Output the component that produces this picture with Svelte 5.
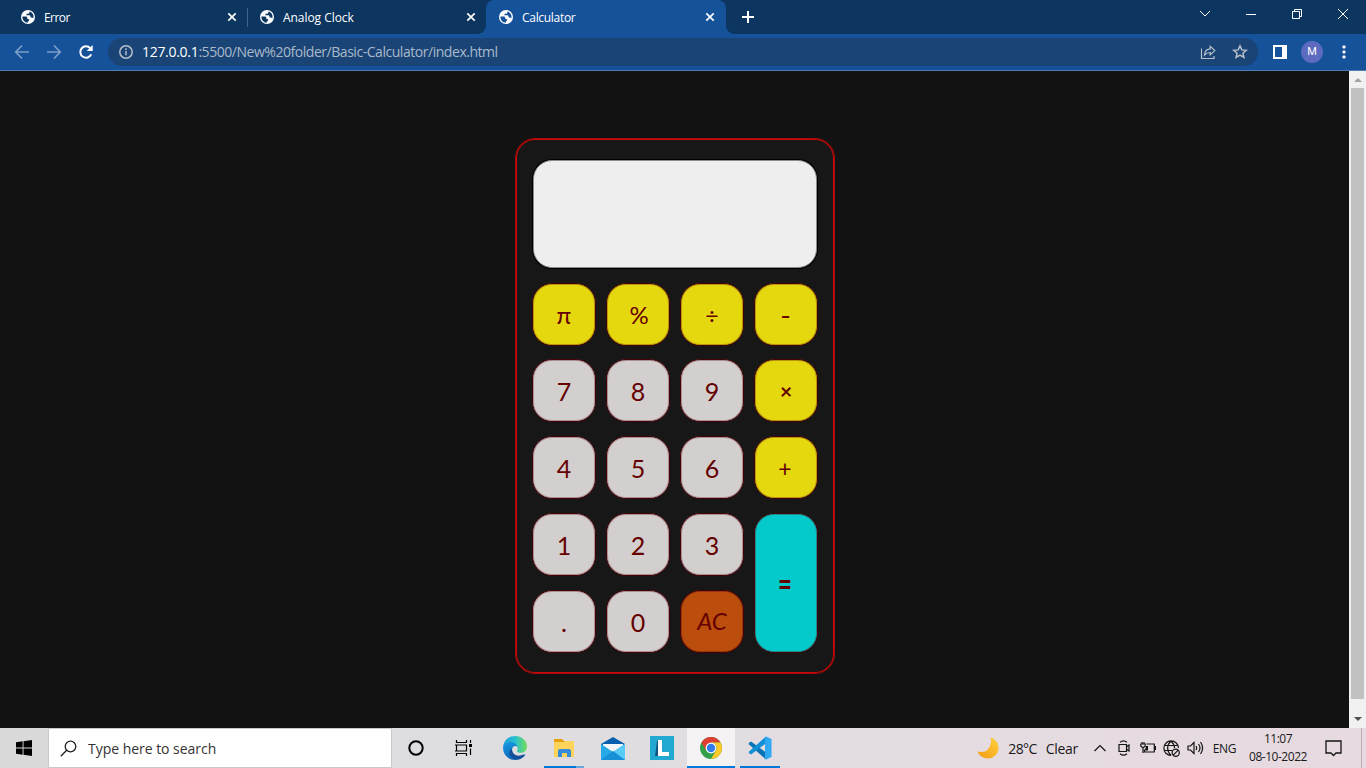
<script>
  const tabs = [
    { title: 'Error', active: false },
    { title: 'Analog Clock', active: false },
    { title: 'Calculator', active: true }
  ];
  const keys = [
    ['π', 'op pi'], ['%', 'op pct'], ['÷', 'op divide'], ['-', 'op minus'],
    ['7', ''], ['8', ''], ['9', ''], ['×', 'op times'],
    ['4', ''], ['5', ''], ['6', ''], ['+', 'op plus-key'],
    ['1', ''], ['2', ''], ['3', ''], ['=', 'equals'],
    ['.', ''], ['0', ''], ['AC', 'clear']
  ];
</script>

<div class="desktop">
  <header class="tabstrip">
    {#each tabs as tab}
      <div class="tab" class:active={tab.active}>
        <svg class="globe" width="14" height="14" viewBox="0 0 14 14">
          <circle cx="7" cy="7" r="7" fill="#fff" />
          <path d="M1.4 6.6h3.2c1 0 1.7.7 1.7 1.6 0 .7.5 1 1.3 1h.5v1c0 .7-.5 1-1.3 1.1v1.4C3.700 12.800 1.300 10.100 1.400 6.600ZM8.400 1.500v.7c0 1-.6 1.600-1.600 1.600H5.500v1.500h2.600c1 0 1.500.6 1.500 1.500v.6h1.200c.7 0 1.200.4 1.400 1C13.300 5.300 11.500 2.200 8.400 1.500Z" fill={tab.active ? '#15529a' : '#0c355f'} />
        </svg>
        <span class="title">{tab.title}</span>
        <svg class="close" width="10" height="10" viewBox="0 0 10 10"><path d="M1.300 1.300l7.400 7.400M8.700 1.300L1.300 8.700" stroke="#fff" stroke-width="1.700" /></svg>
      </div>
    {/each}
    <svg class="plus" width="12" height="12" viewBox="0 0 12 12"><path d="M6 0v12M0 6h12" stroke="#fff" stroke-width="2" /></svg>
    <div class="window-controls">
      <svg width="12" height="12" viewBox="0 0 12 12"><path d="M1 3l5 5 5-5" /></svg>
      <svg width="12" height="12" viewBox="0 0 12 12"><path d="M1 6.500h10" /></svg>
      <svg width="12" height="12" viewBox="0 0 12 12"><path d="M1.500 3.500h7v7h-7zM3.500 3.500v-2h7v7h-2" /></svg>
      <svg width="12" height="12" viewBox="0 0 12 12"><path d="M1 1l10 10M11 1L1 11" /></svg>
    </div>
  </header>

  <nav class="toolbar">
    <svg class="arrow" width="16" height="16" viewBox="0 0 16 16"><path d="M15 8H2M8 1.500L1.700 8 8 14.500" /></svg>
    <svg class="arrow" width="16" height="16" viewBox="0 0 16 16"><path d="M1 8h13M8 1.500L14.300 8 8 14.500" /></svg>
    <svg class="reload" width="16" height="16" viewBox="0 0 16 16"><path d="M13.200 10.400A5.700 5.700 0 1 1 12.300 4.200L13.400 5.400" /><path d="M14.700 1v6H8.700z" class="solid" /></svg>
    <div class="address">
      <svg width="14" height="14" viewBox="0 0 14 14"><circle cx="7" cy="7" r="6.200" /><path d="M7 6v4.200M7 3.300v1.600" /></svg>
      <span class="url"><b>127.0.0.1</b>:5500/New%20folder/Basic-Calculator/index.html</span>
      <svg class="share" width="16" height="16" viewBox="0 0 16 16"><path d="M1.500 4.500v10h12.500v-2.500M4.500 11c.3-4 2.400-6 5.700-6.200V2.300l4.600 4.300-4.600 4.300V8.500C7.700 8.500 6 9.300 4.500 11Z" /></svg>
      <svg class="star" width="16" height="16" viewBox="0 0 16 16"><path d="M8 1.900l1.800 4 4.400.4-3.300 2.900 1 4.300L8 11.200l-3.900 2.300 1-4.300L1.800 6.300l4.400-.4Z" /></svg>
    </div>
    <svg class="panel" width="14" height="14" viewBox="0 0 14 14"><path fill="#fff" fill-rule="evenodd" d="M0 0h14v14H0zM2 2v10h7V2z" /></svg>
    <span class="avatar">M</span>
    <svg class="dots" width="4" height="14" viewBox="0 0 4 14"><g fill="#fff"><rect x=".5" y=".5" width="3" height="3" rx="1" /><rect x=".5" y="5.500" width="3" height="3" rx="1" /><rect x=".5" y="10.500" width="3" height="3" rx="1" /></g></svg>
  </nav>

  <main class="viewport">
    <div class="page">
      <section class="calculator">
        <div class="screen"></div>
        <div class="keys">
          {#each keys as [label, kind]}
            <button class={`key ${kind}`}><span>{label}</span></button>
          {/each}
        </div>
      </section>
    </div>
    <div class="scrollbar">
      <i class="up"></i>
      <div class="thumb"></div>
      <i class="down"></i>
    </div>
  </main>

  <footer class="taskbar">
    <svg class="start" width="16" height="16" viewBox="0 0 16 16"><path d="M0 2.200l6.600-.9v6.200H0zM7.500 1.200L16 0v7.500H7.500zM0 8.500h6.600v6.200L0 13.800zM7.500 8.500H16V16l-8.500-1.200z" /></svg>
    <div class="search">
      <svg width="17" height="17" viewBox="0 0 17 17"><circle cx="10.500" cy="6.500" r="5.300" /><path d="M6.700 10.300L.8 16.200" /></svg>
      <span>Type here to search</span>
    </div>
    <div class="apps">
      <div class="app cortana"><svg width="16" height="16" viewBox="0 0 16 16"><circle cx="8" cy="8" r="6.700" fill="none" stroke="#000" stroke-width="2" /></svg></div>
      <div class="app tasks"><svg width="17" height="16" viewBox="0 0 17 16"><path d="M1.500 0v2.500h10V0M1.500 16v-2.500h10V16M1.500 5h10v6h-10zM0 5h1.500M0 11h1.500M15.500 0v3M15.500 8.500V15" fill="none" stroke="#000" stroke-width="1.200" /><path d="M14 4h3v3h-3z" /></svg></div>
      <div class="app"><svg width="24" height="24" viewBox="0 0 24 24">
        <defs>
          <linearGradient id="edgeTop" x1="0" y1="0.500" x2="1" y2="0.500"><stop stop-color="#1c9ddd" /><stop offset=".5" stop-color="#29bfd0" /><stop offset="1" stop-color="#70df58" /></linearGradient>
          <linearGradient id="edgeBody" x1="0" y1="0" x2="0.500" y2="1"><stop stop-color="#199be4" /><stop offset="1" stop-color="#0b62b6" /></linearGradient>
        </defs>
        <path d="M.1 11C.7 4.500 5.700 0 12 0c7 0 12 5 12 10.500 0 4-3 6.300-6.300 6.300-2.800 0-4.300-1.200-3.500-2.500 1-1.700.5-5-3.500-6C6.500 7.300 2 8.300.1 11Z" fill="url(#edgeTop)" />
        <path d="M.1 11C1.500 7.500 5 5.800 8.500 6.200c3.300.4 5.300 2.300 5.700 4.700C12.500 9.200 9 10 9 14c0 4.500 5 8 10.500 6.500C17.500 22.800 14.800 24 12 24 5 24-.5 18 .1 11Z" fill="url(#edgeBody)" />
        <path d="M9.100 12.500c-.7 5 4.200 8.200 9 6.800 1.800-.5 3.300-1.300 4-.6.200 1-2.600 3.500-5.200 4.500-5.500 1.500-10.900-2-10.400-7 .2-1.700 1.200-3 2.600-3.700Z" fill="#13509c" />
      </svg></div>
      <div class="app open files"><svg width="22" height="19" viewBox="0 0 22 19">
        <path d="M1 0h8l2 2h9v4H1z" fill="#e5a00d" />
        <path d="M1 3h10l1-1h9v16H1z" fill="#ffd35a" />
        <path d="M5 18v-6q0-2 2-2h9q2 0 2 2v6h-4v-4H9v4z" fill="#378bd8" />
      </svg></div>
      <div class="app mail"><svg width="24" height="23" viewBox="0 0 24 23">
        <path d="M0 7L12 0l12 7v4H0z" fill="#075fae" /><path d="M2 7h20v6l-10 5L2 13z" fill="#f5f8fa" />
        <path d="M0 7l12 8 12-8v16H0z" fill="#27a9e8" /><path d="M24 7v16L9 13l3 2z" fill="#59cbf6" /><path d="M0 23l12-9 12 9z" fill="#1790d8" />
      </svg></div>
      <div class="app lens"><svg width="24" height="24" viewBox="0 0 24 24"><path d="M0 0h24v24H0z" fill="#22a9d2" /><path d="M7 5l2-1v13h9l-1 3H5z" fill="#10557d" /><path d="M8 4h4v12h7v4H8z" fill="#fff" /></svg></div>
      <div class="app open selected"><svg width="22" height="22" viewBox="0 0 22 22">
        <circle cx="11" cy="11" r="11" fill="#34a04a" />
        <path d="M1.500 5.500A11 11 0 0 1 20.500 5.500H11L6.200 13.700Z" fill="#df3e32" />
        <path d="M20.500 5.500A11 11 0 0 1 11 22l4.800-8.200A5.500 5.500 0 0 0 11 5.500Z" fill="#ffc928" />
        <circle cx="11" cy="11" r="5.400" fill="#fff" /><circle cx="11" cy="11" r="4.200" fill="#327bea" />
      </svg></div>
      <div class="app open code"><svg width="24" height="24" viewBox="0 0 24 24">
        <path d="M1.500 6.500L3 5.500 20 18l-2 5.500L.5 8z" fill="#0873b7" />
        <path d="M.5 16L18 .5l1 6L3 18.500l-1.500-1z" fill="#138fd7" />
        <path d="M18 .5l5.500 2.600v17.800L18 23.500q-1 0-1-1.500V2q0-1.500 1-1.500z" fill="#31a8f2" />
      </svg></div>
    </div>
    <div class="weather">
      <svg width="22" height="22" viewBox="0 0 22 22"><defs><linearGradient id="moon" x1="0" y1="1" x2="1" y2="0"><stop stop-color="#f39b16" /><stop offset="1" stop-color="#ffd13b" /></linearGradient></defs><path d="M13.500.5C19 2.500 22 6.500 21.500 12c-.5 5-4.800 9.300-10.500 9.500C6 21.500 2 18.500.5 14.500c6 1.500 10-.5 12-4.500 1.700-3.500 2-6.500 1-9.500Z" fill="url(#moon)" /></svg>
      <span class="temp">28°C</span><span class="sky">Clear</span>
    </div>
    <div class="tray">
      <svg width="14" height="8" viewBox="0 0 14 8"><path d="M1.500 7L7 1.500 12.500 7" /></svg>
      <svg class="meet" width="12" height="16" viewBox="0 0 12 16"><path d="M1 4.500h7.500v7H1zM8.500 7l2.500-2v6L8.500 9M2 2.300Q5.500-.5 9 2.300M2 13.700q3.500 2.800 7 0" /></svg>
      <svg class="battery" width="16" height="12" viewBox="0 0 16 12"><path d="M6.500 2h7.800v8H4.500V7.500M14.500 4.500h1v3h-1M2 0v2M4 0v2M.8 2h4.400v2.300L3 5.800.8 4.300zM3 6v5" /><path d="M6 4h2v4.500H5z" fill="#111" stroke="none" /></svg>
      <svg class="network" width="17" height="17" viewBox="0 0 17 17"><path d="M15.500 8A7.300 7.300 0 1 0 8 15.500M8 1C3.500 5 3.500 11 8 15.500M8 1c2.200 2 3.500 4.400 3.500 7M1 5.500h14M1 10.500h8" /><circle cx="12.700" cy="12.700" r="3.600" /><path d="M10.200 15.200l5-5" /></svg>
      <svg class="sound" width="17" height="14" viewBox="0 0 17 14"><path d="M1 5h2.500L7 1.500v11L3.500 9H1zM9 5q1.300 2 0 4M11.500 3q3 4 0 8M13.500 1q4.200 6 0 12" /></svg>
      <span class="language">ENG</span>
    </div>
    <div class="clock"><span class="time">11:07</span><span class="date">08-10-2022</span></div>
    <svg class="notice" width="17" height="17" viewBox="0 0 17 17"><path d="M1 1h15v12h-5l-2.500 2.500L6 13H1z" /></svg>
    <div class="peek"></div>
  </footer>
</div>

<style>
  :global(body) { margin: 0; overflow: hidden; }
  * { box-sizing: border-box; }
  svg { flex: none; display: block; }
  .desktop { width: 1366px; height: 768px; display: flex; flex-direction: column; font-family: "Open Sans", "Noto Sans", sans-serif; background: #121212; }

  .tabstrip { height: 34px; background: #0c355f; display: flex; align-items: center; padding-left: 8px; flex: none; }
  .tab { position: relative; width: 239px; height: 34px; display: flex; align-items: center; padding: 0 9px 0 13px; color: #fff; font-size: 12px; }
  .tab:first-child::after { content: ""; position: absolute; right: -1px; top: 8px; height: 19px; width: 1px; background: #416387; }
  .tab.active { width: 240px; padding-right: 10px; background: #15529a; border-radius: 8px 8px 0 0; }
  .tab.active::before, .tab.active::after { content: ""; position: absolute; bottom: 0; width: 8px; height: 8px; }
  .tab.active::before { left: -8px; background: radial-gradient(circle at 0 0, transparent 7.500px, #15529a 8px); }
  .tab.active::after { right: -8px; background: radial-gradient(circle at 100% 0, transparent 7.500px, #15529a 8px); }
  .title { margin-left: 9px; flex: 1; font-size: 12px; letter-spacing: -0.05px; }
  .tab:first-child .title { letter-spacing: -0.55px; }
  .tab.active .title { letter-spacing: -0.3px; }
  .close { margin-right: 1px; }
  .plus { margin-left: 16px; }
  .window-controls { margin-left: auto; display: flex; gap: 34px; padding-right: 17px; padding-bottom: 6px; }
  .window-controls svg { fill: none; stroke: #fff; stroke-width: 1; }

  .toolbar { height: 37px; border-bottom: 1px solid #4c7eb5; background: #15529a; display: flex; align-items: center; padding-left: 14px; flex: none; }
  .arrow { fill: none; stroke: #7c9fc8; stroke-width: 1.700; margin-right: 16px; }
  .reload { fill: none; stroke: #fff; stroke-width: 2; margin-right: 14px; }
  .reload .solid { fill: #fff; stroke: none; }
  .address { width: 1150px; height: 28px; border-radius: 14px; background: #194475; display: flex; align-items: center; padding: 0 10px 0 11px; }
  .address svg { fill: none; stroke: #b7c0cb; stroke-width: 1.500; }
  .url { margin-left: 9px; font-size: 14px; line-height: 20px; color: #a9b9cb; flex: 1; letter-spacing: -0.46px; white-space: nowrap; }
  .url b { font-weight: 400; color: #fff; letter-spacing: -0.3px; }
  .address .share { margin-right: 16px; stroke-width: 1.200; }
  .panel { margin-left: 15px; }
  .avatar { width: 22px; height: 22px; margin-left: 14px; border-radius: 50%; background: #5c6bc0; color: #fff; font: 11px/22px Roboto, sans-serif; text-align: center; }
  .dots { margin-left: 19px; }

  .viewport { height: 657px; display: flex; flex: none; }
  .page { flex: 1; display: flex; justify-content: center; align-items: flex-start; padding-top: 67px; padding-left: 1px; background: #121212; }
  .calculator { width: 320px; height: 536px; border: 1px solid #a50a0a; box-shadow: inset 0 0 0 1px #d20808; border-radius: 20px; background: #171717; padding: 21px 17px; }
  .screen { width: 284px; height: 108px; background: #eee; border: 1px solid #8a8a8a; border-radius: 19px; box-shadow: 0 0 0 1px #000; }
  .keys { display: grid; grid-template-columns: repeat(4, 64px); grid-template-rows: repeat(5, 63px); column-gap: 10px; row-gap: 13.800px; margin: 14.500px 0 0 -1px; }
  .key { width: 64px; height: 63px; padding: 0; border: 1px solid #430006; box-shadow: inset 0 0 0 1px rgba(80, 0, 6, .3); border-radius: 20px; background: #d3cfce; color: #650000; font: 25px/1 Lato, sans-serif; display: flex; align-items: center; justify-content: center; }
  .key span { transform: translateY(0.500px); }
  .op { background: #e5d80f; }
  .op span { font-size: 23px; }
  .pi span { font-size: 24px; transform: translateY(1px); }
  .pct span { font-size: 24px; transform: translate(1px, 1px); }
  .divide span { transform: translateY(1px); }
  .minus span { font-size: 25px; transform: translate(0, 1px) scaleX(1.150); }
  .times span { font-size: 21px; font-weight: 700; transform: translateY(0); }
  .plus-key span { transform: translate(-1px, 1px); }
  .equals { grid-row: span 2; height: 140px; background: #05cacb; font: 700 24px/1 Lato, sans-serif; }
  .equals span { transform: translate(-1px, 1px) scaleY(1.350); }
  .clear { background: #bb4e0c; font: italic 24px/1 Lato, sans-serif; }
  .clear span { transform: translateY(0); }

  .scrollbar { width: 17px; background: #f1f1f1; display: flex; flex-direction: column; align-items: center; }
  .scrollbar i { border-left: 4px solid transparent; border-right: 4px solid transparent; }
  .up { margin-top: 7px; border-bottom: 4px solid #a3a3a3; }
  .thumb { width: 13px; height: 611px; margin-top: 6px; background: #c1c1c1; }
  .down { margin-top: 18px; border-top: 4px solid #505050; }

  .taskbar { height: 40px; display: flex; align-items: center; flex: none; background: linear-gradient(90deg, #d9d9d9, #dedde0 35%, #e4dce1 70%, #e7dae0); color: #191919; }
  .start { margin: 0 16px; }
  .search { width: 344px; height: 40px; border: 1px solid #c9c9c9; background: #fff; display: flex; align-items: center; padding-left: 11px; font-size: 14px; color: #333; letter-spacing: -0.03px; }
  .search svg { fill: none; stroke: #222; stroke-width: 1.300; margin-right: 11px; }
  .apps { display: flex; }
  .app { width: 49px; height: 40px; display: flex; align-items: center; justify-content: center; }
  .cortana { width: 48px; }
  .tasks { width: 50px; padding-right: 3px; }
  .open { box-shadow: inset 0 -2px #0078d7; }
  .selected { background: #f4f2f3; width: 48px; }
  .files { width: 40px; margin: 0 5px; box-shadow: none; background: linear-gradient(90deg, #0078d7 32px, #68a8df 32px) bottom / 100% 2px no-repeat; }
  .mail { padding-right: 2px; }
  .lens { padding-right: 1px; }
  .code { width: 40px; margin-left: 5px; }
  .weather { margin-left: auto; display: flex; align-items: center; font-size: 14px; }
  .temp { margin-left: 9px; letter-spacing: -0.55px; }
  .sky { margin-left: 9px; letter-spacing: -0.35px; }
  .tray { display: flex; align-items: center; margin-left: 15px; }
  .tray svg { fill: none; stroke: #151515; stroke-width: 1.200; }
  .meet { margin-left: 11px; }
  .battery { margin-left: 10px; }
  .network { margin-left: 7px; }
  .sound { margin-left: 7px; }
  .language { margin-left: 9px; font-size: 12px; letter-spacing: -0.4px; }
  .clock { width: 60px; height: 40px; margin-left: 12px; display: flex; flex-direction: column; align-items: center; font-size: 12px; line-height: 18px; padding-top: 2px; letter-spacing: -0.48px; white-space: nowrap; }
  .notice { margin-left: 17px; fill: none; stroke: #151515; stroke-width: 1.300; }
  .peek { width: 5px; height: 40px; margin-left: 19px; border-left: 1px solid #b9aeb4; }
</style>
